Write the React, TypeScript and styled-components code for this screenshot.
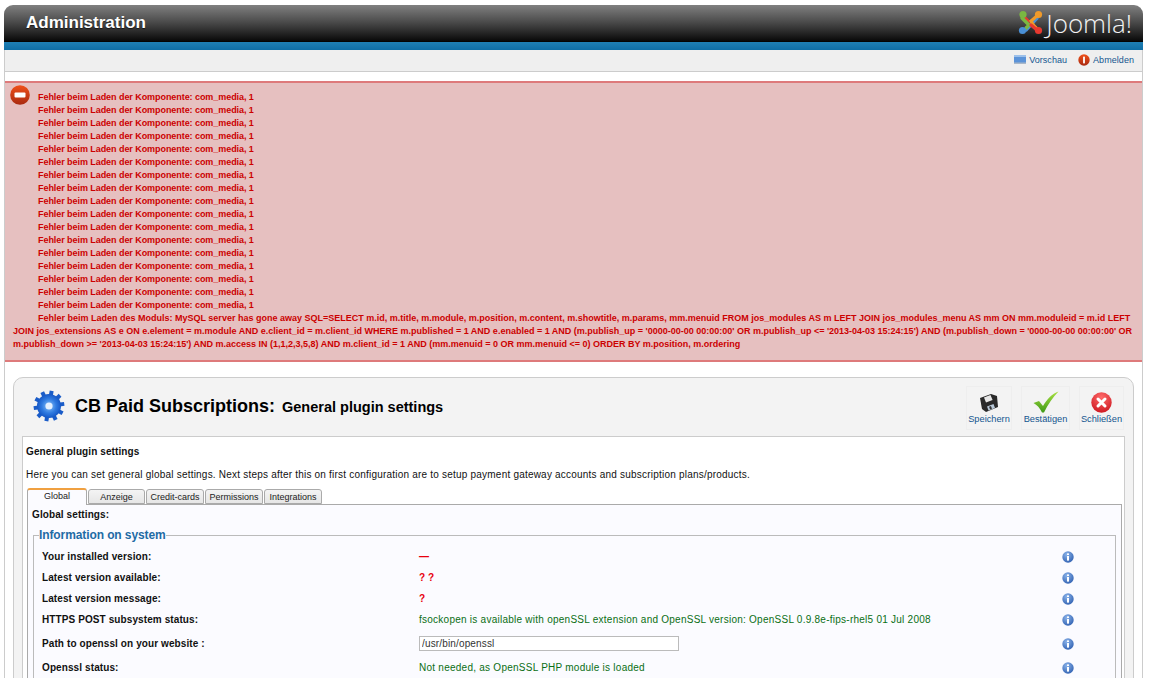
import React from 'react';
import styled, { createGlobalStyle } from 'styled-components';

const GlobalStyle = createGlobalStyle`
  html, body {
    margin: 0;
    padding: 0;
    background: #fff;
    height: 678px;
    overflow: hidden;
    font-family: "Liberation Sans", Arial, sans-serif;
  }
`;

const Page = styled.div`
  padding: 5px 8px 0 4px;
  height: 673px;
  overflow: hidden;
`;

const TopBar = styled.header`
  height: 37px;
  padding: 0 11px 0 22px;
  display: flex;
  align-items: center;
  justify-content: space-between;
  border-radius: 9px 9px 0 0;
  background: linear-gradient(#808080, #4c4c4c 45%, #0c0c0c 95%, #000);
`;

const AdminTitle = styled.h1`
  margin: 0 0 1px;
  font-size: 17px;
  font-weight: bold;
  color: #fff;
  text-shadow: 0 1px 1px rgba(0, 0, 0, 0.6);
`;

const Brand = styled.div`
  display: flex;
  align-items: center;
  gap: 3px;
  margin-bottom: 2px;
`;

const BrandName = styled.span`
  font-family: "Open Sans", sans-serif;
  font-weight: 300;
  font-size: 26px;
  line-height: 24px;
  color: #f2f2f2;
`;

const BlueBand = styled.div`
  height: 8px;
  background: linear-gradient(#1f7fb4, #0f6ea5);
`;

const Shell = styled.div`
  border-left: 1px solid #ccc;
  border-right: 1px solid #ccc;
`;

const StatusBar = styled.nav`
  height: 21px;
  box-sizing: content-box;
  display: flex;
  align-items: center;
  justify-content: flex-end;
  gap: 11px;
  padding-right: 8px;
  background: #efefef;
  border-bottom: 1px solid #ccc;
`;

const StatusLink = styled.a`
  display: flex;
  align-items: center;
  gap: 3px;
  margin-bottom: 2px;
  font-size: 9px;
  letter-spacing: 0.05px;
  color: #14568f;
`;

const ErrorBox = styled.section`
  position: relative;
  margin-top: 9px;
  padding: 8px 5px 9px 8px;
  background: #e6c0c0;
  border-top: 2px solid #de7a7b;
  border-bottom: 2px solid #de7a7b;
  color: #c00;
  font-size: 9px;
  font-weight: bold;
  line-height: 13px;
`;

const ErrorIcon = styled.svg`
  position: absolute;
  left: 5px;
  top: 2px;
`;

const ErrorLine = styled.div<{ $spacing: number }>`
  text-indent: 25px;
  letter-spacing: ${p => p.$spacing}px;
`;

const Panel = styled.main`
  margin: 15px 8px 0;
  padding: 0 8px;
  background: #f3f3f3;
  border: 1px solid #ccc;
  border-radius: 10px 10px 0 0;
`;

const PanelHead = styled.div`
  height: 58px;
  display: flex;
  align-items: center;
  justify-content: space-between;
`;

const HeadTitle = styled.div`
  display: flex;
  align-items: center;
  gap: 10px;
  padding-left: 11px;
  margin-bottom: 2px;
`;

const TitleMain = styled.h2`
  margin: 0;
  font-size: 18px;
  font-weight: bold;
  color: #000;
`;

const TitleSub = styled.span`
  font-size: 14.5px;
  margin-left: 2px;
`;

const Toolbar = styled.div`
  display: flex;
  gap: 9px;
  margin-top: 2px;
  margin-right: 1px;
`;

const ToolButton = styled.div<{ $w: number }>`
  width: ${p => p.$w}px;
  height: 44px;
  box-sizing: border-box;
  border: 1px solid #eee;
  display: flex;
  flex-direction: column;
  align-items: center;
  justify-content: flex-end;
  gap: 1px;
  padding-bottom: 5px;
  font-size: 9.25px;
  color: #14568f;
`;

const ContentBox = styled.div`
  background: #fff;
  border: 1px solid #ccc;
  border-bottom: 0;
  padding: 0 2px 0 3px;
  height: 250px;
`;

const BoxHeading = styled.div`
  margin-top: 9px;
  font-size: 10px;
  line-height: 11px;
  font-weight: bold;
  letter-spacing: 0.1px;
  color: #111;
`;

const BoxIntro = styled.p`
  margin: 12px 0 0;
  font-size: 10px;
  line-height: 11px;
  letter-spacing: 0.21px;
  color: #111;
`;

const TabRow = styled.div`
  display: flex;
  align-items: flex-end;
  gap: 1px;
  margin: 7px 0 0 1px;
  height: 17px;
`;

const Tab = styled.div<{ $active?: boolean; $w: number }>`
  width: ${p => p.$w}px;
  box-sizing: border-box;
  height: ${p => (p.$active ? 17 : 15)}px;
  text-align: center;
  font-size: 9px;
  line-height: ${p => (p.$active ? 12 : 14)}px;
  color: #222;
  margin-bottom: ${p => (p.$active ? -1 : 0)}px;
  position: relative;
  border: 1px solid #aaa;
  border-bottom: ${p => (p.$active ? 0 : '1px solid #aaa')};
  border-top: ${p => (p.$active ? '2px solid #f0a040' : '1px solid #aaa')};
  border-radius: 3px 3px 0 0;
  background: ${p => (p.$active ? '#fbfbff' : 'linear-gradient(#f4f4f4, #e6e6e6)')};
`;

const TabPane = styled.div`
  margin-left: 1px;
  padding: 0 5px 0 4px;
  background: #fbfbff;
  border: 1px solid #aaa;
  border-bottom: 0;
  height: 220px;
`;

const PaneHeading = styled.div`
  margin-top: 4px;
  font-size: 10px;
  line-height: 11px;
  font-weight: bold;
  letter-spacing: 0.1px;
  color: #111;
`;

const Fieldset = styled.fieldset`
  margin: 8px 0 0 1px;
  padding: 0 0 0 8px;
  border: 1px solid #bbb;
  border-bottom: 0;
`;

const Legend = styled.legend`
  padding: 0;
  margin-left: -3px;
  font-size: 12px;
  line-height: 14px;
  font-weight: bold;
  color: #1f6ba5;
  letter-spacing: -0.1px;
`;

const Rows = styled.div`
  margin-top: 4px;
`;

const Row = styled.div<{ $h: number }>`
  display: grid;
  grid-template-columns: 377px 643px 14px;
  align-items: center;
  height: ${p => p.$h}px;
`;

const Label = styled.span`
  font-size: 10px;
  font-weight: bold;
  letter-spacing: 0.1px;
  color: #111;
`;

const Value = styled.span<{ $tone: 'red' | 'green' }>`
  font-size: 10px;
  letter-spacing: ${p => (p.$tone === 'red' ? 0 : 0.25)}px;
  font-weight: ${p => (p.$tone === 'red' ? 'bold' : 'normal')};
  color: ${p => (p.$tone === 'red' ? '#e8000d' : '#0a6e14')};
`;

const PathInput = styled.input`
  width: 260px;
  height: 15px;
  box-sizing: border-box;
  padding: 0 2px;
  border: 1px solid #bbb;
  background: #fff;
  font-family: "Liberation Sans", sans-serif;
  font-size: 10px;
  letter-spacing: 0.15px;
  color: #333;
`;

const InfoIcon = () => (
  <svg width="12" height="12" viewBox="0 0 12 12">
    <defs>
      <radialGradient id="infoBg" cx="0.4" cy="0.3" r="0.9">
        <stop offset="0" stopColor="#8cb4ea" />
        <stop offset="1" stopColor="#1c4fa6" />
      </radialGradient>
    </defs>
    <circle cx="6" cy="6" r="5.7" fill="url(#infoBg)" />
    <rect x="5" y="5" width="2" height="4.6" fill="#fff" />
    <rect x="5" y="2.4" width="2" height="1.6" fill="#fff" />
  </svg>
);

// four interlocked arms, each ending in a ball
const JoomlaMark = () => (
  <svg width="25" height="25" viewBox="0 0 25 25" fill="none" strokeLinecap="round">
    <path d="M5 6 L10 11 M13 13 L20 20" stroke="#e8392f" strokeWidth="3.4" />
    <path d="M8 20 L19 8" stroke="#4a90d6" strokeWidth="3.4" />
    <path d="M4 8 L11 15 L8 18" stroke="#7ab842" strokeWidth="3.4" />
    <path d="M20 5 L13 11 L16 16 L20 20" stroke="#f09a2a" strokeWidth="3.2" />
    <path d="M13 15 L19 20" stroke="#e8392f" strokeWidth="3.4" />
    <circle cx="5" cy="4.5" r="3.6" fill="#7ab842" />
    <circle cx="20.5" cy="4.5" r="3.6" fill="#f09a2a" />
    <circle cx="4.5" cy="20.5" r="3.6" fill="#4a90d6" />
    <circle cx="20.5" cy="20.5" r="3.6" fill="#e8392f" />
  </svg>
);

const PreviewIcon = () => (
  <svg width="12" height="9" viewBox="0 0 12 9">
    <rect width="12" height="9" fill="#5b93d8" />
    <rect width="12" height="2" fill="#9cc0ea" />
    <rect y="7.5" width="12" height="1.5" fill="#aab8c8" />
  </svg>
);

const RedBallGradient = ({ id }: { id: string }) => (
  <defs>
    <linearGradient id={id} x1="0" y1="0" x2="0" y2="1">
      <stop offset="0" stopColor="#f0501a" />
      <stop offset="1" stopColor="#a82a10" />
    </linearGradient>
  </defs>
);

const LogoutIcon = () => (
  <svg width="12" height="12" viewBox="0 0 12 12">
    <RedBallGradient id="logoutBg" />
    <circle cx="6" cy="6" r="5.7" fill="url(#logoutBg)" />
    <rect x="5.1" y="2.6" width="1.8" height="6.8" rx="0.6" fill="#fff" />
  </svg>
);

const GearIcon = () => (
  <svg width="32" height="32" viewBox="0 0 32 32">
    <defs>
      <radialGradient id="gearBg" cx="0.5" cy="0.5" r="0.55">
        <stop offset="0" stopColor="#8cc4fa" />
        <stop offset="0.55" stopColor="#2f7ae0" />
        <stop offset="1" stopColor="#0f4fc0" />
      </radialGradient>
    </defs>
    <g fill="#1a5cc8">
      {Array.from({ length: 10 }, (_, i) => i * 36).map(a => (
        <rect key={a} x="14" y="0.6" width="4" height="6" transform={`rotate(${a + 10} 16 16)`} />
      ))}
    </g>
    <circle cx="16" cy="16" r="12" fill="url(#gearBg)" />
    <circle cx="16" cy="16" r="3.6" fill="#e4f0ff" />
  </svg>
);

const SaveIcon = () => (
  <svg width="20" height="20" viewBox="0 0 20 20">
    <path d="M1 5 L12 1 L18 3 L19 14 L7 19 L3 16 Z" fill="#2a2a2a" />
    <path d="M5 4.4 L11.5 2 L13.6 7 L7 9.4 Z" fill="#e8e8e8" />
    <path d="M8 13.5 L14.5 11 L16 15 L9.5 17.6 Z" fill="#b8c8d8" />
    <rect x="10.5" y="13.2" width="2" height="3" fill="#333" transform="rotate(-20 11.5 14.7)" />
  </svg>
);

const CheckIcon = () => (
  <svg width="26" height="22" viewBox="0 0 26 22">
    <defs>
      <linearGradient id="checkBg" x1="0" y1="0" x2="0" y2="1">
        <stop offset="0" stopColor="#a8e040" />
        <stop offset="1" stopColor="#3f9a18" />
      </linearGradient>
    </defs>
    <path d="M0.5 12 L6 10 L10 15 C14 8 19 3 25.5 0.5 C20 6 15 13 11 21.5 L9 21.5 C7 17 4 14 0.5 12 Z" fill="url(#checkBg)" />
  </svg>
);

const CloseIcon = () => (
  <svg width="21" height="21" viewBox="0 0 21 21">
    <defs>
      <radialGradient id="closeBg" cx="0.5" cy="0.25" r="0.85">
        <stop offset="0" stopColor="#ff6a6a" />
        <stop offset="1" stopColor="#c8101a" />
      </radialGradient>
    </defs>
    <circle cx="10.5" cy="10.5" r="10.2" fill="url(#closeBg)" />
    <path d="M7 7 L14 14 M14 7 L7 14" stroke="#fff" strokeWidth="3" strokeLinecap="round" />
  </svg>
);

const componentErrors = Array.from({ length: 17 }, () => 'Fehler beim Laden der Komponente: com_media, 1');

const settings: { label: string; value?: string; tone?: 'red' | 'green'; h: number; input?: boolean }[] = [
  { label: 'Your installed version:', value: '—', tone: 'red', h: 21 },
  { label: 'Latest version available:', value: '? ?', tone: 'red', h: 21 },
  { label: 'Latest version message:', value: '?', tone: 'red', h: 21 },
  {
    label: 'HTTPS POST subsystem status:',
    value: 'fsockopen is available with openSSL extension and OpenSSL version: OpenSSL 0.9.8e-fips-rhel5 01 Jul 2008',
    tone: 'green',
    h: 21,
  },
  { label: 'Path to openssl on your website :', input: true, h: 27 },
  { label: 'Openssl status:', value: 'Not needed, as OpenSSL PHP module is loaded', tone: 'green', h: 21 },
];

const App = () => {
  return (
    <Page>
      <GlobalStyle />
      <TopBar>
        <AdminTitle>Administration</AdminTitle>
        <Brand>
          <JoomlaMark />
          <BrandName>Joomla!</BrandName>
        </Brand>
      </TopBar>
      <BlueBand />
      <Shell>
        <StatusBar>
          <StatusLink>
            <PreviewIcon />
            Vorschau
          </StatusLink>
          <StatusLink>
            <LogoutIcon />
            Abmelden
          </StatusLink>
        </StatusBar>
        <ErrorBox>
          <ErrorIcon width="20" height="20" viewBox="0 0 20 20">
            <RedBallGradient id="errorBg" />
            <circle cx="10" cy="10" r="9.8" fill="url(#errorBg)" />
            <rect x="4.5" y="7.5" width="11" height="5" rx="1" fill="#fff" />
          </ErrorIcon>
          {componentErrors.map((line, i) => (
            <ErrorLine key={i} $spacing={-0.06}>{line}</ErrorLine>
          ))}
          <ErrorLine $spacing={0}>
            Fehler beim Laden des Moduls: MySQL server has gone away SQL=SELECT m.id, m.title, m.module, m.position, m.content, m.showtitle, m.params, mm.menuid FROM jos_modules AS m LEFT JOIN jos_modules_menu AS mm ON mm.moduleid = m.id LEFT JOIN jos_extensions AS e ON e.element = m.module AND e.client_id = m.client_id WHERE m.published = 1 AND e.enabled = 1 AND (m.publish_up = '0000-00-00 00:00:00' OR m.publish_up &lt;= '2013-04-03 15:24:15') AND (m.publish_down = '0000-00-00 00:00:00' OR m.publish_down &gt;= '2013-04-03 15:24:15') AND m.access IN (1,1,2,3,5,8) AND m.client_id = 1 AND (mm.menuid = 0 OR mm.menuid &lt;= 0) ORDER BY m.position, m.ordering
          </ErrorLine>
        </ErrorBox>
        <Panel>
          <PanelHead>
            <HeadTitle>
              <GearIcon />
              <TitleMain>
                CB Paid Subscriptions: <TitleSub>General plugin settings</TitleSub>
              </TitleMain>
            </HeadTitle>
            <Toolbar>
              <ToolButton $w={46}>
                <SaveIcon />
                Speichern
              </ToolButton>
              <ToolButton $w={49}>
                <CheckIcon />
                Bestätigen
              </ToolButton>
              <ToolButton $w={45}>
                <CloseIcon />
                Schließen
              </ToolButton>
            </Toolbar>
          </PanelHead>
          <ContentBox>
            <BoxHeading>General plugin settings</BoxHeading>
            <BoxIntro>
              Here you can set general global settings. Next steps after this on first configuration are to setup payment gateway accounts and subscription plans/products.
            </BoxIntro>
            <TabRow>
              <Tab $active $w={60}>Global</Tab>
              <Tab $w={57}>Anzeige</Tab>
              <Tab $w={58}>Credit-cards</Tab>
              <Tab $w={58}>Permissions</Tab>
              <Tab $w={58}>Integrations</Tab>
            </TabRow>
            <TabPane>
              <PaneHeading>Global settings:</PaneHeading>
              <Fieldset>
                <Legend>Information on system</Legend>
                <Rows>
                  {settings.map(row => (
                    <Row key={row.label} $h={row.h}>
                      <Label>{row.label}</Label>
                      {row.input ? (
                        <PathInput readOnly value="/usr/bin/openssl" />
                      ) : (
                        <Value $tone={row.tone ?? 'green'}>{row.value}</Value>
                      )}
                      <InfoIcon />
                    </Row>
                  ))}
                </Rows>
              </Fieldset>
            </TabPane>
          </ContentBox>
        </Panel>
      </Shell>
    </Page>
  );
};

export default App;
